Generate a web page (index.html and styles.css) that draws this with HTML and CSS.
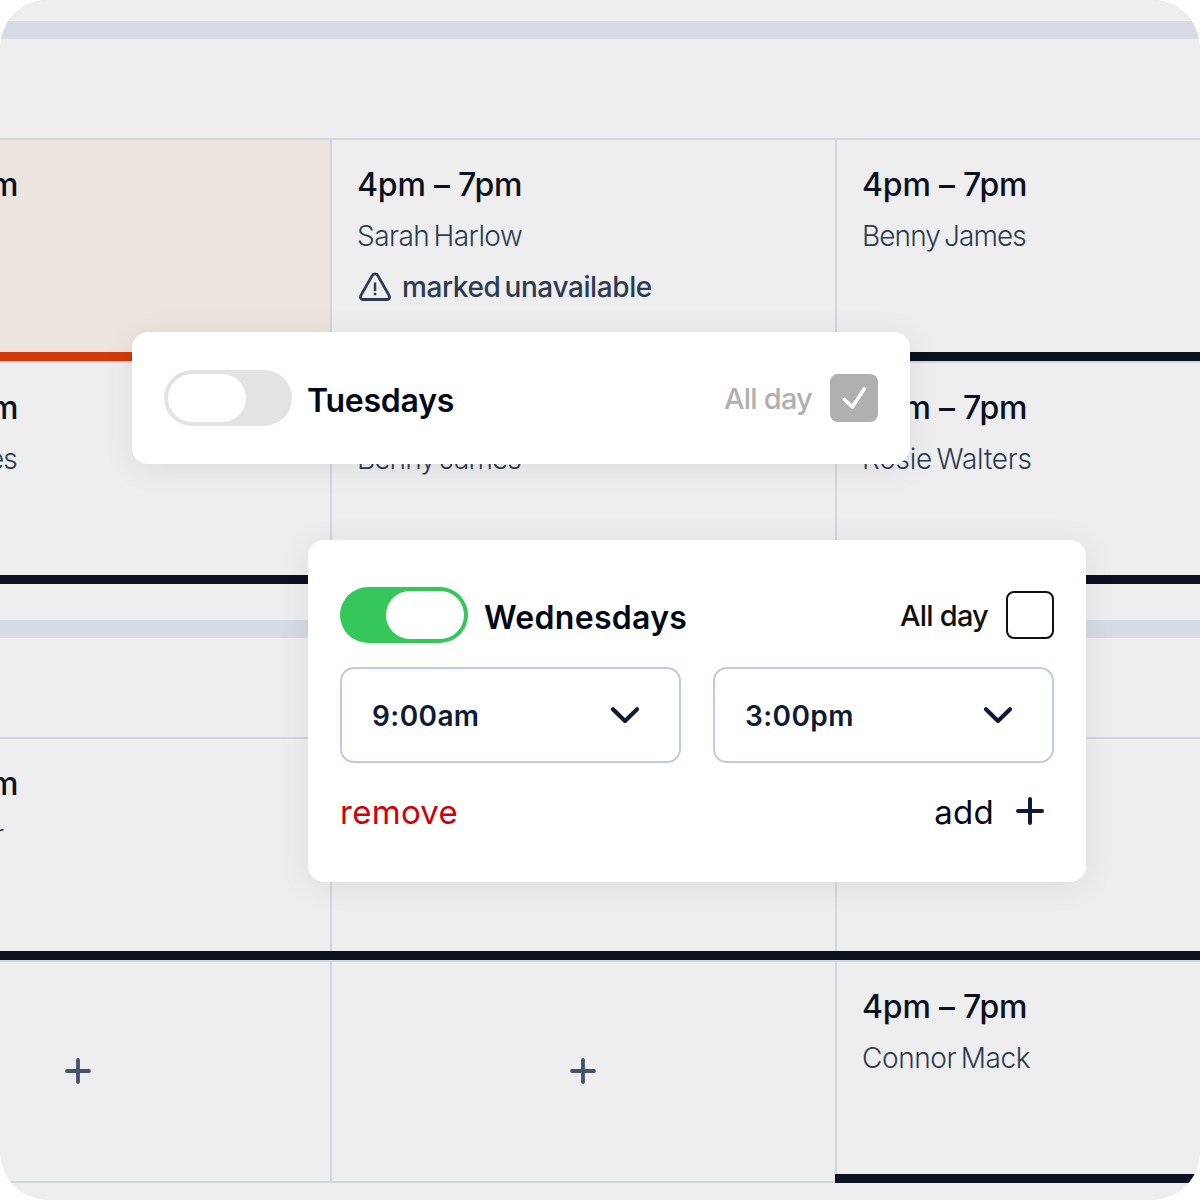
FILE: index.html
```html
<!DOCTYPE html>
<html lang="en">
<head>
  <meta charset="UTF-8">
  <title>Staff Availability</title>
  <link rel="stylesheet" href="styles.css">
</head>
<body>
  <div class="frame">
    <div class="schedule">
      <div class="band first"></div>
      <div class="week-header"></div>

      <div class="row">
        <div class="cell alert">
          <div class="time">4pm – 7pm</div>
        </div>
        <div class="cell filled">
          <div class="time">4pm – 7pm</div>
          <div class="name sarah">Sarah Harlow</div>
          <div class="warning">
            <svg width="34" height="32" viewBox="0 0 34 32" fill="none" stroke="currentColor" stroke-width="2.8" stroke-linecap="round" stroke-linejoin="round">
              <path d="M14.2 4.6 2.9 24.4c-1.2 2.1 0 4.1 2.2 4.1h23.8c2.2 0 3.4-2 2.2-4.1L19.8 4.6c-1.3-2.2-4.3-2.2-5.6 0Z"/>
              <path d="M17 12.7v6M17 23v.1" stroke-width="2.5" stroke-linecap="square"/>
            </svg>
            <span>marked unavailable</span>
          </div>
        </div>
        <div class="cell filled">
          <div class="time">4pm – 7pm</div>
          <div class="name benny">Benny James</div>
        </div>
      </div>

      <div class="row">
        <div class="cell filled">
          <div class="time">4pm – 7pm</div>
          <div class="name benny">Benny James</div>
        </div>
        <div class="cell filled">
          <div class="time">4pm – 7pm</div>
          <div class="name benny">Benny James</div>
        </div>
        <div class="cell filled">
          <div class="time">4pm – 7pm</div>
          <div class="name rosie">Rosie Walters</div>
        </div>
      </div>

      <div class="band"></div>
      <div class="week-header"></div>

      <div class="row">
        <div class="cell filled">
          <div class="time">4pm – 7pm</div>
          <div class="name taylor">Oliver Taylor</div>
        </div>
        <div class="cell filled"></div>
        <div class="cell filled"></div>
      </div>

      <div class="row last">
        <div class="cell empty">
          <svg width="28" height="28" viewBox="0 0 28 28" stroke="currentColor" stroke-width="3.8" stroke-linecap="round">
            <path d="M14 3v22M3 14h22"/>
          </svg>
        </div>
        <div class="cell empty">
          <svg width="28" height="28" viewBox="0 0 28 28" stroke="currentColor" stroke-width="3.8" stroke-linecap="round">
            <path d="M14 3v22M3 14h22"/>
          </svg>
        </div>
        <div class="cell filled">
          <div class="time">4pm – 7pm</div>
          <div class="name connor">Connor Mack</div>
        </div>
      </div>
    </div>

    <div class="card tuesday">
      <div class="day-row">
        <div class="toggle"><span class="thumb"></span></div>
        <h3>Tuesdays</h3>
        <span class="all-day muted">All day</span>
        <div class="checkbox checked">
          <svg width="48" height="48" viewBox="0 0 48 48" fill="none" stroke="#fff" stroke-width="3.6" stroke-linecap="round" stroke-linejoin="round">
            <path d="M14.4 25.5 22.4 33 34.3 14.8"/>
          </svg>
        </div>
      </div>
    </div>

    <div class="card wednesday">
      <div class="day-row">
        <div class="toggle on"><span class="thumb"></span></div>
        <h3>Wednesdays</h3>
        <span class="all-day">All day</span>
        <div class="checkbox"></div>
      </div>
      <div class="times">
        <div class="select">
          <span>9:00am</span>
          <svg width="32" height="20" viewBox="0 0 32 20" fill="none" stroke="currentColor" stroke-width="4.2" stroke-linecap="round" stroke-linejoin="round">
            <path d="M4 4.3 16 16 28 4.3"/>
          </svg>
        </div>
        <div class="select">
          <span>3:00pm</span>
          <svg width="32" height="20" viewBox="0 0 32 20" fill="none" stroke="currentColor" stroke-width="4.2" stroke-linecap="round" stroke-linejoin="round">
            <path d="M4 4.3 16 16 28 4.3"/>
          </svg>
        </div>
      </div>
      <div class="actions">
        <span class="remove">remove</span>
        <span class="add">add</span>
        <svg width="28" height="28" viewBox="0 0 28 28" stroke="#0f1b35" stroke-width="4" stroke-linecap="round">
          <path d="M14 2v24M2 14h24"/>
        </svg>
      </div>
    </div>
  </div>
</body>
</html>
```

FILE: styles.css
```css
* {
  box-sizing: border-box;
}

body {
  margin: 0;
  background-color: #fff;
  font-family: Inter, 'Liberation Sans', sans-serif;
}

svg {
  display: block;
  flex-shrink: 0;
}

.frame {
  position: relative;
  width: 1200px;
  height: 1200px;
  border-radius: 48px;
  background-color: #eee;
  overflow: hidden;
}

/* schedule grid */
.schedule {
  width: 1515px;
  margin-left: -173px;
}

.band {
  height: 18px;
  background-color: #d6dbe4;
}

.band.first {
  border-top: 21px solid #eee;
  height: 39px;
}

.week-header {
  height: 99px;
}

.row {
  display: grid;
  grid-template-columns: 503px 505px 507px;
  height: 223px;
  border-top: 2px solid #d0d6e2;
}

.row + .band {
  margin-top: 36px;
}

.cell {
  position: relative;
  padding: 25px 0 9px 26px;
}

.cell + .cell {
  padding-left: 25px;
  border-left: 2px solid #d0d6e2;
}

/* shift colour strip along the bottom of a cell */
.filled::after,
.alert::after {
  content: "";
  position: absolute;
  left: -2px;
  right: 0;
  bottom: 0;
  height: 9px;
  background-color: #0b111e;
}

.alert {
  background-color: #ede4de;
}

.alert::after {
  background-color: #d13a0a;
}

.time {
  font-size: 32px;
  line-height: 40px;
  font-weight: 500;
  letter-spacing: -0.2px;
  color: #0b111e;
  white-space: nowrap;
}

.name {
  margin-top: 11px;
  font-size: 28px;
  line-height: 40px;
  font-weight: 300;
  word-spacing: -3px;
  color: #2c3c50;
  white-space: nowrap;
}

.sarah {
  letter-spacing: -0.55px;
}

.benny {
  letter-spacing: -0.9px;
}

.rosie {
  letter-spacing: -0.25px;
}

.connor {
  letter-spacing: -0.4px;
}

.taylor {
  letter-spacing: -0.75px;
}

.warning {
  display: flex;
  align-items: center;
  gap: 10px;
  margin: 11px 0 0 1px;
  font-size: 28px;
  line-height: 40px;
  font-weight: 500;
  letter-spacing: -0.4px;
  word-spacing: -3px;
  color: #2c3c50;
}

.cell.empty {
  display: flex;
  align-items: center;
  justify-content: center;
  padding: 6px 2px 9px 0;
  color: #43536a;
}

.row.last {
  background-image: linear-gradient(#d0d6e2, #d0d6e2);
  background-size: 100% 2px;
  background-position: bottom;
  background-repeat: no-repeat;
}

/* availability cards */
.card {
  position: absolute;
  width: 778px;
  padding: 0 32px;
  border-radius: 16px;
  background-color: #fff;
  box-shadow: 0 4px 32px rgba(0, 0, 0, 0.08);
}

.tuesday {
  left: 132px;
  top: 332px;
  height: 132px;
  padding-top: 38px;
}

.wednesday {
  left: 308px;
  top: 540px;
  height: 342px;
  padding-top: 47px;
}

.day-row {
  display: flex;
  align-items: center;
  height: 56px;
}

.toggle {
  display: flex;
  width: 128px;
  height: 56px;
  padding: 4px;
  border-radius: 28px;
  background-color: #e3e3e3;
}

.toggle.on {
  justify-content: flex-end;
  background-color: #35c759;
}

.thumb {
  width: 78px;
  height: 48px;
  border-radius: 24px;
  background-color: #fff;
}

h3 {
  margin: 6px 0 0 16px;
  font-size: 32px;
  line-height: 40px;
  font-weight: 600;
  color: #020818;
}

.tuesday h3 {
  margin-left: 15px;
  letter-spacing: -0.25px;
}

.wednesday h3 {
  letter-spacing: 0.3px;
}

.all-day {
  margin: 2px 18px 0 auto;
  font-size: 29px;
  line-height: 40px;
  font-weight: 500;
  letter-spacing: -0.8px;
  color: #111;
}

.muted {
  color: #b0b0b0;
}

.checkbox {
  width: 48px;
  height: 48px;
  border: 2px solid #111;
  border-radius: 8px;
}

.checkbox.checked {
  border: none;
  background-color: #b0b0b0;
}

.times {
  display: flex;
  gap: 32px;
  margin-top: 24px;
}

.select {
  flex: 1;
  display: flex;
  align-items: center;
  justify-content: space-between;
  height: 96px;
  padding: 0 38px 0 30px;
  border: 2px solid #bdcbe0;
  border-radius: 14px;
  font-size: 28px;
  font-weight: 600;
  letter-spacing: 0.4px;
  color: #0f1b35;
}

.select span {
  padding-top: 2px;
}

.actions {
  display: flex;
  align-items: center;
  height: 48px;
  margin-top: 24px;
  padding-right: 10px;
  font-size: 33px;
  line-height: 40px;
  letter-spacing: 0.3px;
}

.actions span {
  padding-top: 2px;
}

.remove {
  color: #d0000b;
}

.add {
  margin: 0 22px 0 auto;
  color: #020818;
}
```
